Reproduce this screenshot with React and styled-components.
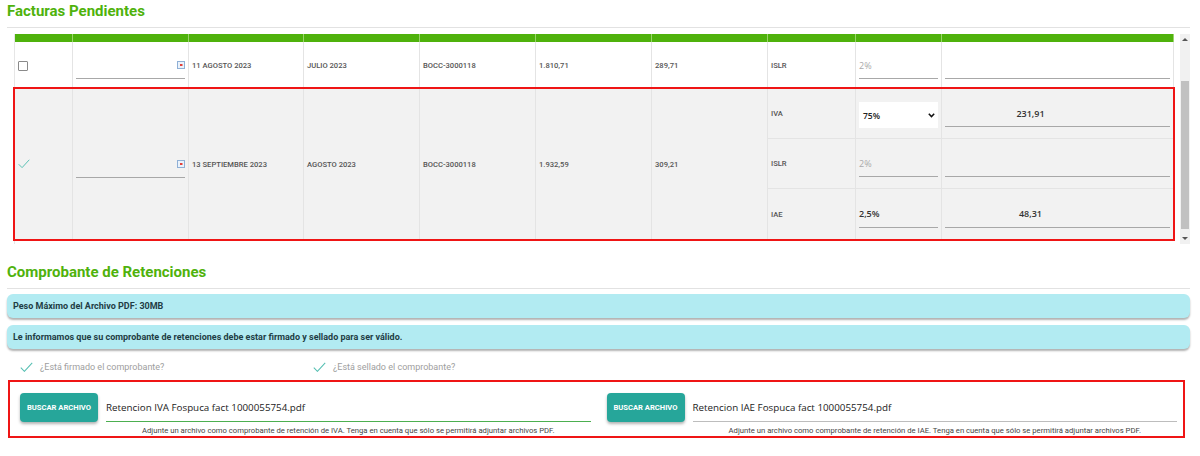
import React from 'react';
import styled, { createGlobalStyle } from 'styled-components';

const GREEN = '#4fb20c';
const TEAL = '#26a69a';
const ALERT = '#ef1515';
const COLS = '58px 116px 115px 116px 116px 116px 116px 88px 86px 232px';

const GlobalStyle = createGlobalStyle`
	body {
		margin: 0;
		background: #fff;
		font-family: Roboto, "Liberation Sans", sans-serif;
	}
	* {
		box-sizing: border-box;
	}
`;

const Page = styled.div`
	width: 1200px;
	height: 456px;
	overflow: hidden;
	padding: 0 10px 0 7px;
`;

const SectionTitle = styled.h2`
	margin: ${({ $gap = 0 }) => $gap}px 0 0;
	padding: 1px 0 6px;
	font-size: 15px;
	line-height: 20px;
	font-weight: 700;
	color: ${GREEN};
	border-bottom: 1px solid #e2e2e2;
`;

const TableArea = styled.div`
	display: flex;
	gap: 7px;
	margin-top: 6px;
	padding-left: 7px;
	height: 210px;
`;

const Table = styled.div`
	width: 1159px;
	border-left: 1px solid #e6e6e6;
`;

const HeaderRow = styled.div`
	display: grid;
	grid-template-columns: ${COLS};
	height: 8px;
	background: ${GREEN};
	span {
		border-right: 1px solid #9ad46c;
	}
`;

const Row = styled.div`
	display: grid;
	grid-template-columns: ${COLS};
	grid-template-rows: ${({ $sub = 1, $height }) => `repeat(${$sub}, ${$height}px)`};
	background: ${({ $selected }) => ($selected ? '#f2f2f2' : '#fff')};
	outline: ${({ $selected }) => ($selected ? `2px solid ${ALERT}` : 'none')};
`;

const Cell = styled.div`
	grid-row: span ${({ $span = 1 }) => $span};
	display: flex;
	align-items: center;
	padding: 0 3px;
	border-right: 1px solid #e4e4e4;
	border-bottom: ${({ $divider }) => ($divider ? '1px solid #e4e4e4' : 'none')};
	min-width: 0;
`;

const CellText = styled.span`
	font-size: 7.6px;
	font-weight: 500;
	color: #555;
	text-transform: uppercase;
`;

const Field = styled.div`
	display: flex;
	align-items: center;
	justify-content: ${({ $center }) => ($center ? 'center' : 'space-between')};
	width: 100%;
	height: 27px;
	padding-right: ${({ $center }) => ($center ? '54px' : '0')};
	border-bottom: 1px solid #a8a8a8;
	font-family: "Open Sans", sans-serif;
	font-size: 9px;
	font-weight: 600;
	color: ${({ $muted }) => ($muted ? '#aaa' : '#333')};
	${({ $muted }) => $muted && 'font-weight: 400;'}
`;

const SelectBox = styled.div`
	display: flex;
	align-items: center;
	justify-content: space-between;
	width: 100%;
	height: 26px;
	padding: 0 3px 0 4px;
	background: #fff;
	font-family: "Open Sans", sans-serif;
	font-size: 8.5px;
	font-weight: 600;
	color: #222;
	margin-top: 3px;
`;

const Checkbox = styled.span`
	width: 10px;
	height: 10px;
	border: 1.5px solid #8a8a8a;
	border-radius: 1px;
`;

const Scrollbar = styled.div`
	display: flex;
	flex-direction: column;
	align-items: center;
	width: 10px;
	background: #f1f1f1;
	padding: 2px 0;
`;

const Arrow = styled.span`
	width: 0;
	height: 0;
	border-left: 3px solid transparent;
	border-right: 3px solid transparent;
	${({ $down }) => ($down ? 'border-top: 3px solid #555;' : 'border-bottom: 3px solid #555;')}
	margin: 2px 0;
`;

const Thumb = styled.span`
	width: 8px;
	margin: 38px 0 6px;
	flex: 1;
	background: #c1c1c1;
`;

const InfoBox = styled.div`
	display: flex;
	align-items: center;
	height: 24px;
	margin-top: ${({ $gap }) => $gap}px;
	padding-left: 6px;
	border-radius: 6px;
	background: #b2ebf2;
	box-shadow: 0 2px 2px rgba(0, 0, 0, 0.3);
	font-size: 9px;
	font-weight: 700;
	color: #1f3d45;
`;

const ConfirmRow = styled.div`
	display: flex;
	align-items: center;
	height: 20px;
	margin-top: 8px;
	padding-left: 13px;
`;

const ConfirmItem = styled.div`
	display: flex;
	align-items: center;
	gap: 7px;
	width: 293px;
	font-size: 9px;
	color: #9e9e9e;
`;

const UploadBox = styled.div`
	display: grid;
	grid-template-columns: 1fr 1fr;
	margin: 3px 5px 0 1px;
	padding-top: 11px;
	border: 2px solid ${ALERT};
	height: 58px;
`;

const UploadCol = styled.div`
	display: flex;
	align-items: flex-start;
	gap: 8px;
	padding: 0 6px 0 10px;
`;

const Button = styled.button`
	height: 29px;
	padding: 0 7px;
	border: none;
	border-radius: 4px;
	background: ${TEAL};
	color: #fff;
	font-family: Roboto, sans-serif;
	font-size: 7.6px;
	font-weight: 700;
	text-transform: uppercase;
	box-shadow: 0 2px 3px rgba(0, 0, 0, 0.3);
	white-space: nowrap;
`;

const FileField = styled.div`
	flex: 1;
	display: flex;
	flex-direction: column;
`;

const FileName = styled.div`
	display: flex;
	align-items: center;
	height: 29px;
	border-bottom: 1px solid ${({ $valid }) => ($valid ? '#4caf50' : '#bdbdbd')};
	font-family: "Open Sans", sans-serif;
	font-size: 9.8px;
	color: #222;
`;

const Help = styled.div`
	margin-top: 4px;
	font-size: 7.7px;
	line-height: 10px;
	text-align: center;
	color: #444;
	white-space: nowrap;
`;

const CalendarIcon = () => (
	<svg width="8" height="8" viewBox="0 0 8 8">
		<rect x="0.5" y="0.5" width="7" height="7" fill="#eaf2fb" stroke="#8fb0d6" />
		<rect x="3" y="3" width="2.5" height="2" fill="#e2403a" />
	</svg>
);

const CheckIcon = ({ size = 12 }) => (
	<svg width={size} height={size * 0.8} viewBox="0 0 12 10">
		<polyline points="0.5,5.5 4,9 11.5,0.8" fill="none" stroke="#55bfb2" strokeWidth="1" />
	</svg>
);

const Chevron = () => (
	<svg width="7" height="5" viewBox="0 0 7 5">
		<polyline points="0.8,0.8 3.5,3.6 6.2,0.8" fill="none" stroke="#111" strokeWidth="1.5" />
	</svg>
);

const DateField = () => (
	<Field>
		<span />
		<CalendarIcon />
	</Field>
);

export default function App() {
	return (
		<Page>
			<GlobalStyle />
			<SectionTitle>Facturas Pendientes</SectionTitle>
			<TableArea>
				<Table>
					<HeaderRow>
						{Array.from({ length: 10 }).map((_, i) => (
							<span key={i} />
						))}
					</HeaderRow>
					<Row $height={47}>
						<Cell><Checkbox /></Cell>
						<Cell><DateField /></Cell>
						<Cell><CellText>11 Agosto 2023</CellText></Cell>
						<Cell><CellText>Julio 2023</CellText></Cell>
						<Cell><CellText>BOCC-3000118</CellText></Cell>
						<Cell><CellText>1.810,71</CellText></Cell>
						<Cell><CellText>289,71</CellText></Cell>
						<Cell><CellText>ISLR</CellText></Cell>
						<Cell><Field $muted>2%</Field></Cell>
						<Cell><Field /></Cell>
					</Row>
					<Row $selected $sub={3} $height={50}>
						<Cell $span={3}><CheckIcon /></Cell>
						<Cell $span={3}><DateField /></Cell>
						<Cell $span={3}><CellText>13 Septiembre 2023</CellText></Cell>
						<Cell $span={3}><CellText>Agosto 2023</CellText></Cell>
						<Cell $span={3}><CellText>BOCC-3000118</CellText></Cell>
						<Cell $span={3}><CellText>1.932,59</CellText></Cell>
						<Cell $span={3}><CellText>309,21</CellText></Cell>
						<Cell $divider><CellText>IVA</CellText></Cell>
						<Cell $divider>
							<SelectBox>75% <Chevron /></SelectBox>
						</Cell>
						<Cell $divider><Field $center>231,91</Field></Cell>
						<Cell $divider><CellText>ISLR</CellText></Cell>
						<Cell $divider><Field $muted>2%</Field></Cell>
						<Cell $divider><Field /></Cell>
						<Cell><CellText>IAE</CellText></Cell>
						<Cell><Field>2,5%</Field></Cell>
						<Cell><Field $center>48,31</Field></Cell>
					</Row>
				</Table>
				<Scrollbar>
					<Arrow />
					<Thumb />
					<Arrow $down />
				</Scrollbar>
			</TableArea>

			<SectionTitle $gap={17}>Comprobante de Retenciones</SectionTitle>
			<InfoBox $gap={5}>Peso Máximo del Archivo PDF: 30MB</InfoBox>
			<InfoBox $gap={7}>
				Le informamos que su comprobante de retenciones debe estar firmado y sellado para ser válido.
			</InfoBox>
			<ConfirmRow>
				<ConfirmItem><CheckIcon size={13} />¿Está firmado el comprobante?</ConfirmItem>
				<ConfirmItem><CheckIcon size={13} />¿Está sellado el comprobante?</ConfirmItem>
			</ConfirmRow>
			<UploadBox>
				<UploadCol>
					<Button>Buscar archivo</Button>
					<FileField>
						<FileName $valid>Retencion IVA Fospuca fact 1000055754.pdf</FileName>
						<Help>
							Adjunte un archivo como comprobante de retención de IVA. Tenga en cuenta que sólo se permitirá adjuntar archivos PDF.
						</Help>
					</FileField>
				</UploadCol>
				<UploadCol>
					<Button>Buscar archivo</Button>
					<FileField>
						<FileName>Retencion IAE Fospuca fact 1000055754.pdf</FileName>
						<Help>
							Adjunte un archivo como comprobante de retención de IAE. Tenga en cuenta que sólo se permitirá adjuntar archivos PDF.
						</Help>
					</FileField>
				</UploadCol>
			</UploadBox>
		</Page>
	);
}
